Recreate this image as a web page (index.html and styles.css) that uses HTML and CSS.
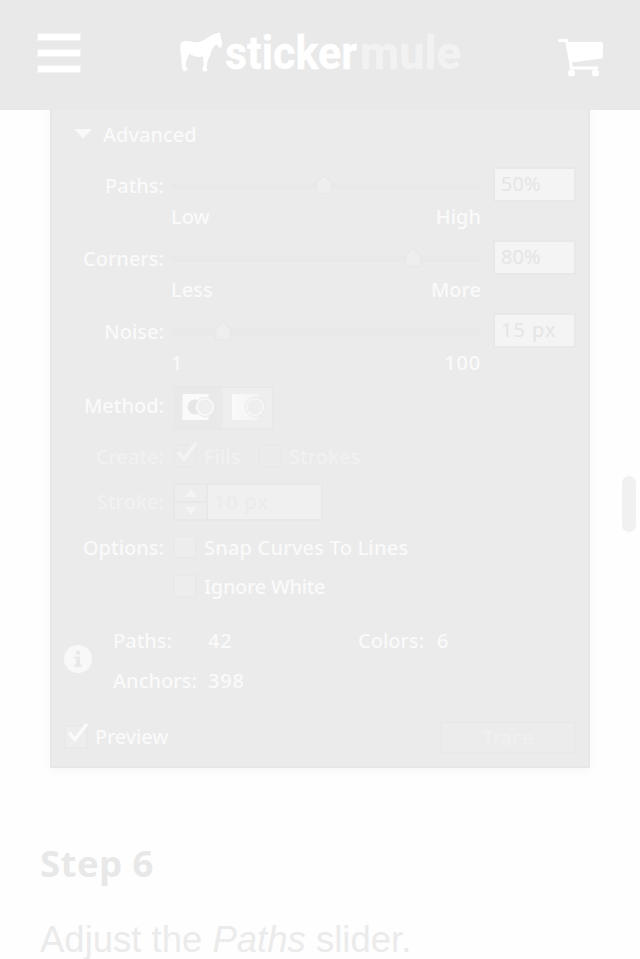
FILE: index.html
```
<!DOCTYPE html>
<html lang="en">
<head>
<meta charset="utf-8">
<title>Sticker Mule</title>
<link rel="stylesheet" href="styles.css">
</head>
<body>
<header class="header">
  <div class="menu"><i></i><i></i><i></i></div>
  <div class="brand">
    <svg class="mule" width="44" height="40" viewBox="0 0 44 40"><path fill="#fff" d="M.800 11C2.500 8.500 7 8.500 11 9.500C19 12 25 8 30 4Q33.500 1.300 37 1.500L38.500 .300L39.500 1.500L41 .500L40.300 3.500C41 6 41.800 9 42.300 11.500L41.300 15.500L39 15.800Q38 12.800 36 12.500C33 15 31.500 18 30.800 21C29.500 24.500 28 28 27 32L26.500 35.500L27.500 38L26.500 39.500H23.500L22.200 36.500L23.800 34L23 24.300C18 26 13 24 9.500 21.800C8 25 6 28 5.500 34L7.500 37L6.500 38.800H3.200L2 36L1.200 24C.300 19-.300 15 .800 11Z"/></svg>
    <svg class="wordmark" width="238" height="50" viewBox="0 0 238 50"><text class="w1" x="1" y="38" textLength="132" lengthAdjust="spacingAndGlyphs">sticker</text><text class="w2" x="136" y="38" textLength="101" lengthAdjust="spacingAndGlyphs">mule</text></svg>
  </div>
  <svg class="cart" width="46" height="40" viewBox="0 0 46 40"><g fill="none" stroke="#fff" stroke-width="3" stroke-linecap="round" stroke-linejoin="round"><path d="M1.500 2.500H8.500L13 26.500V30H39"/></g><path fill="#fff" stroke="#fff" stroke-linejoin="round" d="M9.500 4.500H43Q44.500 4.500 44.500 6V18.500Q44.500 20 43 20.200L13 24Z"/><circle cx="13.500" cy="35" r="3.600" fill="#fff"/><circle cx="37.500" cy="35" r="3.600" fill="#fff"/></svg>
</header>
<main>
  <section class="panel">
    <div class="advanced"><svg width="18" height="10" viewBox="0 0 18 10"><path fill="#f9f9f9" d="M0 0H18L9 9.500Z"/></svg><b>Advanced</b><hr></div>

    <div class="slider">
      <div class="row"><label>Paths:</label><div class="track"><svg class="thumb at50" width="18" height="22" viewBox="0 0 18 22"><path d="M1.500 8.500L9 1.500L16.500 8.500V19.500H1.500Z"/></svg></div><span class="field">50%</span></div>
      <div class="scale"><span>Low</span><span>High</span></div>
    </div>
    <div class="slider">
      <div class="row"><label>Corners:</label><div class="track"><svg class="thumb at80" width="18" height="22" viewBox="0 0 18 22"><path d="M1.500 8.500L9 1.500L16.500 8.500V19.500H1.500Z"/></svg></div><span class="field">80%</span></div>
      <div class="scale"><span>Less</span><span>More</span></div>
    </div>
    <div class="slider">
      <div class="row"><label>Noise:</label><div class="track"><svg class="thumb at15" width="18" height="22" viewBox="0 0 18 22"><path d="M1.500 8.500L9 1.500L16.500 8.500V19.500H1.500Z"/></svg></div><span class="field px">15 px</span></div>
      <div class="scale"><span>1</span><span class="hundred">100</span></div>
    </div>

    <div class="row method"><label>Method:</label>
      <svg class="methods" width="101" height="44" viewBox="0 0 101 44">
        <defs><linearGradient id="g"><stop offset="0" stop-color="#fafafa"/><stop offset="1" stop-color="#f3f3f3"/></linearGradient></defs>
        <rect x="1" y="1" width="99" height="42" fill="#e9e9e9" stroke="#e8e8e8" stroke-width="1.500"/>
        <rect x="50" y="2" width="49" height="40" fill="#eeeeee"/>
        <rect x="9.500" y="8" width="26" height="26" fill="#fafafa"/><circle cx="22" cy="21" r="7.500" fill="#e7e7e7"/><circle cx="32" cy="21" r="10" fill="#e8e8e8"/><circle cx="32" cy="21" r="8.300" fill="#efefef" stroke="#fafafa" stroke-width="1.500"/>
        <rect x="59" y="8" width="26" height="26" fill="url(#g)"/><circle cx="82" cy="21" r="10" fill="#e9e9e9"/><circle cx="82" cy="21" r="8.300" fill="#eeeeee" stroke="#f8f8f8" stroke-width="1.500"/>
      </svg>
    </div>
    <div class="row create dim"><label>Create:</label><span class="box"><svg width="26" height="24" viewBox="0 0 26 24"><path d="M5 10L11 17L23 1"/></svg></span><span class="fills">Fills</span><span class="box"></span><span class="strokes">Strokes</span></div>
    <div class="row stroke dim"><label>Stroke:</label>
      <div class="spinner"><div class="arrows"><span><svg width="12" height="8" viewBox="0 0 12 8"><path d="M0 8L6 0L12 8Z"/></svg></span><span><svg width="12" height="8" viewBox="0 0 12 8"><path d="M0 0H12L6 8Z"/></svg></span></div><div class="value">10 px</div></div>
    </div>
    <div class="row options"><label>Options:</label><span class="box"></span><span class="snap">Snap Curves To Lines</span></div>
    <div class="row ignore"><label></label><span class="box"></span><span class="white">Ignore White</span></div>

    <div class="stats">
      <svg width="28" height="28" viewBox="0 0 28 28"><circle cx="14" cy="14" r="14" fill="#f8f8f8"/><circle cx="14" cy="7.800" r="2.200" fill="#e9e9e9"/><path fill="#e9e9e9" d="M10 11.500H16V19.500H18V22H10V19.500H12V13.500H10Z"/></svg>
      <div class="numbers"><span>Paths:</span><span class="num">42</span><span class="colors">Colors:</span><span class="num">6</span><span class="anchors">Anchors:</span><span class="num">398</span></div>
    </div>
    <div class="footer"><span class="box"><svg width="26" height="24" viewBox="0 0 26 24"><path d="M5 9.500L11 16.500L23 1"/></svg></span><span class="preview">Preview</span><span class="trace">Trace</span></div>
  </section>
  <h2>Step 6</h2>
  <p>Adjust the <em>Paths</em> slider.</p>
</main>
<div class="scrollbar"></div>
</body>
</html>
```
FILE: styles.css
```
* { box-sizing: border-box; }
html, body { margin: 0; height: 959px; overflow: hidden; }
body { background: #fefefe; font-family: "Noto Sans", sans-serif; }
svg { display: block; flex: none; }

.header { height: 110px; background: #e9e9e9; display: flex; align-items: flex-start; padding-left: 37px; position: relative; z-index: 1; }
.menu { width: 44px; margin-top: 33px; display: flex; flex-direction: column; gap: 8px; }
.menu i { height: 8px; background: #fff; border: 1px solid #f1f1f1; }
.brand { display: flex; margin-left: 99px; width: 282px; flex: none; }
.mule { margin-top: 32px; }
.wordmark { margin-top: 31px; overflow: visible; }
.w1, .w2 { font-family: Roboto, sans-serif; font-size: 47px; font-weight: 700; fill: #fff; stroke: #fff; stroke-width: .4; }
.w2 { fill: #f2f2f2; stroke: #f2f2f2; }
.cart { margin: 38px 0 0 96px; }

.panel { width: 540px; height: 658px; margin-left: 50px; background: #ebebeb; border: 2px solid #e7e7e7; border-top: 0; box-shadow: 0 2px 10px rgba(0,0,0,.035); color: #fafafa; font-size: 20px; font-weight: 500; line-height: 24px; }
.advanced { height: 48px; display: flex; align-items: center; padding: 0 11px 0 22px; }
.advanced b { font-weight: 500; margin: 2px 8px 0 11px; }
hr { flex: 1; border: 0; border-top: 1px solid #ededed; margin: 0; }
.row { display: flex; align-items: center; }
.row label { width: 112px; margin-right: 9px; text-align: right; flex: none; white-space: nowrap; }
.slider { height: 73px; padding-top: 5px; }
.slider .row { height: 44px; }
.slider label { margin-right: 7px; padding-top: 2px; }
.track { width: 310px; height: 8px; margin-top: 3px; background: #e9e9e9; border-bottom: 1px solid #ededed; position: relative; flex: none; }
.thumb { position: absolute; top: -9px; }
.thumb path { fill: #eeeeee; stroke: #e8e8e8; stroke-width: 1.5; }
.at50 { left: 144px; }
.at80 { left: 233px; }
.at15 { left: 43px; }
.field { width: 83px; height: 35px; margin: -1px 0 0 12px; border: 2px solid #e8e8e8; background: #f4f4f4; color: #e5e5e5; padding: 3px 6px; font-weight: 400; white-space: nowrap; flex: none; }
.px { letter-spacing: 1px; }
.scale { height: 20px; line-height: 20px; width: 310px; margin-left: 119px; display: flex; justify-content: space-between; }
.hundred { letter-spacing: .8px; }
.method { height: 58px; }
.methods { margin-top: 3px; }
.dim { color: #f1f1f1; }
.create { height: 44px; line-height: 22px; }
.box { width: 24px; height: 24px; border: 2px solid #e9e9e9; background: #ededed; flex: none; }
.dim .box { background: #ebebeb; }
.create .box { margin-top: -2px; }
.box svg { margin: -4px 0 0 -2px; }
.box path { fill: none; stroke: #fafafa; stroke-width: 3.5; }
.dim .box path { stroke: #f3f3f3; }
.fills { width: 61px; padding-left: 7px; }
.strokes { padding-left: 7px; }
.stroke { height: 46px; }
.spinner { width: 150px; height: 38px; border: 2px solid #e8e8e8; display: flex; background: #f0f0f0; }
.arrows { width: 33px; border-right: 2px solid #e8e8e8; display: flex; flex-direction: column; background: #ededed; }
.arrows span { flex: 1; display: flex; align-items: center; justify-content: center; }
.arrows span + span { border-top: 2px solid #e8e8e8; }
.arrows path { fill: #f4f4f4; }
.value { color: #ebebeb; padding: 5px 6px; font-weight: 400; letter-spacing: .8px; white-space: nowrap; }
.options { height: 46px; }
.options .box, .ignore .box { margin-top: -2px; }
.ignore { height: 32px; }
.snap, .white { padding-left: 7px; white-space: nowrap; }
.snap { letter-spacing: .2px; }
.white { letter-spacing: -.3px; }
.stats { margin: 10px 11px 0; height: 94px; border-top: 1px solid #ededed; border-bottom: 1px solid #ededed; display: flex; padding-top: 7px; }
.stats > svg { margin: 24px 0 0 1px; }
.numbers { margin-left: 21px; display: grid; grid-template-columns: 95px 150px 79px 40px; grid-auto-rows: 40px; line-height: 40px; }
.numbers span { white-space: nowrap; }
.numbers .num { letter-spacing: .8px; }
.anchors { grid-column: 1; }
.footer { height: 59px; display: flex; align-items: center; padding: 0 12px; }
.preview { padding: 1px 0 0 7px; flex: 1; letter-spacing: -.2px; }
.trace { width: 136px; height: 33px; margin-top: 2px; border: 2px solid #e9e9e9; background: #ececec; color: #f0f0f0; text-align: center; line-height: 30px; }

h2 { margin: 71px 0 0 40px; font: 700 36.5px/48px "Open Sans", sans-serif; letter-spacing: .5px; color: #e8e8e8; }
p { margin: 30px 0 0 40px; font: 36.5px/46px "Liberation Sans", sans-serif; color: #ebebeb; white-space: nowrap; }
.scrollbar { position: absolute; left: 622px; top: 476px; width: 14px; height: 56px; border-radius: 7px; background: #f1f1f1; }
```
